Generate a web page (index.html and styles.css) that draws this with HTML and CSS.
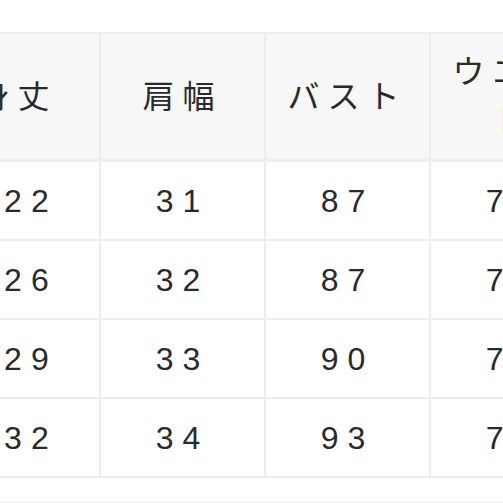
FILE: index.html
```html
<!DOCTYPE html>
<html lang="ja">
<head>
<meta charset="utf-8">
<link rel="stylesheet" href="styles.css">
</head>
<body>
<div class="viewport">
  <table class="size-table">
    <colgroup>
      <col class="c"><col class="c"><col class="c"><col class="c"><col class="c">
    </colgroup>
    <thead>
      <tr class="head">
        <th>身丈</th>
        <th>肩幅</th>
        <th>バスト</th>
        <th>ウエス<br>ト</th>
        <th>ヒップ</th>
      </tr>
    </thead>
    <tbody>
      <tr><td>122</td><td>31</td><td>87</td><td>70</td><td>90</td></tr>
      <tr><td>126</td><td>32</td><td>87</td><td>72</td><td>92</td></tr>
      <tr><td>129</td><td>33</td><td>90</td><td>74</td><td>94</td></tr>
      <tr><td>132</td><td>34</td><td>93</td><td>76</td><td>96</td></tr>
    </tbody>
  </table>
  <div class="next"></div>
</div>
</body>
</html>
```

FILE: styles.css
```css
html, body {
  margin: 0;
  padding: 0;
  background: #ffffff;
}

.viewport {
  width: 503px;
  height: 503px;
  overflow: hidden;
  padding-top: 32px;
  box-sizing: border-box;
  font-family: "Liberation Sans", "Noto Sans CJK JP", sans-serif;
  color: #2a2a2a;
}

.size-table {
  margin-left: -66px;
  border-collapse: collapse;
  table-layout: fixed;
  width: 825px;
}

.size-table .c {
  width: 165px;
}

.size-table th,
.size-table td {
  border: 2px solid #ededed;
  padding: 0;
  text-align: center;
  vertical-align: middle;
  font-size: 32px;
  font-weight: normal;
  letter-spacing: 9px;
  white-space: nowrap;
}

.size-table th {
  height: 125px;
  background: #f7f7f7;
  letter-spacing: 8px;
  line-height: 50px;
}

.size-table .head th {
  border-bottom-width: 3px;
}

.size-table td {
  height: 77px;
  line-height: 36px;
}

.next {
  margin-top: 24px;
  border-top: 2px solid #ededed;
}
```
